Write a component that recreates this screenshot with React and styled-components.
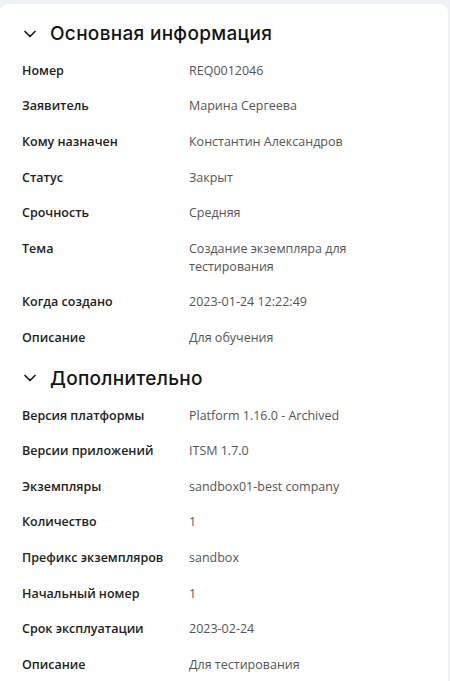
import React from "react";
import styled, { createGlobalStyle } from "styled-components";
import { ChevronDown } from "lucide-react";

const GlobalStyle = createGlobalStyle`
  html, body {
    margin: 0;
    padding: 0;
    background: #eef1f5;
  }
  body {
    font-family: "Open Sans", "Noto Sans", sans-serif;
  }
`;

const Page = styled.div`
  padding: 4px 2px 0 0;
  min-height: 681px;
  box-sizing: border-box;
`;

const Card = styled.div`
  background: #fff;
  border-radius: 8px 8px 0 0;
  padding: 10px 0 0 0;
  min-height: 677px;
  box-sizing: border-box;
`;

const Section = styled.section`
  margin-top: ${(p) => (p.$first ? "0" : "3px")};
`;

const Header = styled.div`
  display: flex;
  align-items: center;
  gap: 10px;
  height: 39px;
  padding-left: 20px;
  color: #141414;
  font-family: Inter, "Noto Sans", sans-serif;
  font-size: 19px;
  font-weight: 500;
  letter-spacing: 0.3px;
`;

const Row = styled.div`
  display: grid;
  grid-template-columns: 167px 200px;
  padding: 8.8px 0 8.8px 22px;
  font-size: 12.5px;
  line-height: 18px;
`;

const Label = styled.div`
  font-weight: 600;
  color: #222;
`;

const Value = styled.div`
  color: #555;
`;

const main = [
  ["Номер", "REQ0012046"],
  ["Заявитель", "Марина Сергеева"],
  ["Кому назначен", "Константин Александров"],
  ["Статус", "Закрыт"],
  ["Срочность", "Средняя"],
  ["Тема", "Создание экземпляра для тестирования"],
  ["Когда создано", "2023-01-24 12:22:49"],
  ["Описание", "Для обучения"],
];

const extra = [
  ["Версия платформы", "Platform 1.16.0 - Archived"],
  ["Версии приложений", "ITSM 1.7.0"],
  ["Экземпляры", "sandbox01-best company"],
  ["Количество", "1"],
  ["Префикс экземпляров", "sandbox"],
  ["Начальный номер", "1"],
  ["Срок эксплуатации", "2023-02-24"],
  ["Описание", "Для тестирования"],
];

function Block({ title, rows, first }) {
  return (
    <Section $first={first}>
      <Header>
        <ChevronDown size={20} strokeWidth={2} />
        {title}
      </Header>
      {rows.map(([k, v]) => (
        <Row key={k}>
          <Label>{k}</Label>
          <Value>{v}</Value>
        </Row>
      ))}
    </Section>
  );
}

export default function App() {
  return (
    <>
      <GlobalStyle />
      <Page>
        <Card>
          <Block title="Основная информация" rows={main} first />
          <Block title="Дополнительно" rows={extra} />
        </Card>
      </Page>
    </>
  );
}
